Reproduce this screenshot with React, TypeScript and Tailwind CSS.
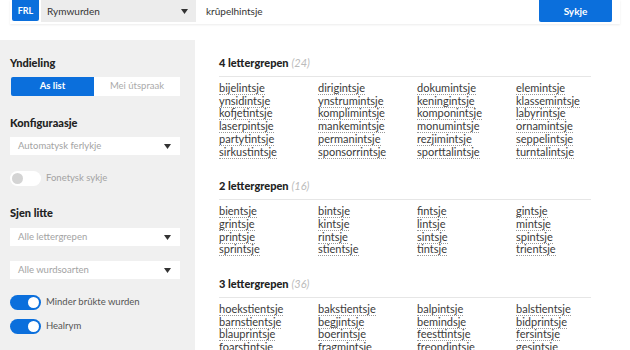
import React from "react";

const groups = [
  {
    title: "4 lettergrepen",
    count: 24,
    words: [
      "bijelintsje", "dirigintsje", "dokumintsje", "elemintsje",
      "ynsidintsje", "ynstrumintsje", "keningintsje", "klassemintsje",
      "kofjetintsje", "komplimintsje", "komponintsje", "labyrintsje",
      "laserpintsje", "mankemintsje", "monumintsje", "ornamintsje",
      "partytintsje", "permanintsje", "rezjimintsje", "seppelintsje",
      "sirkustintsje", "sponsorrintsje", "sporttalintsje", "turntalintsje",
    ],
  },
  {
    title: "2 lettergrepen",
    count: 16,
    words: [
      "bientsje", "bintsje", "fintsje", "gintsje",
      "grintsje", "kintsje", "lintsje", "mintsje",
      "printsje", "rintsje", "sintsje", "spintsje",
      "sprintsje", "stientsje", "tintsje", "trientsje",
    ],
  },
  {
    title: "3 lettergrepen",
    count: 36,
    words: [
      "hoekstientsje", "bakstientsje", "balpintsje", "balstientsje",
      "barnstientsje", "begjintsje", "bemindsje", "bidprintsje",
      "blauprintsje", "boerintsje", "feesttintsje", "fersintsje",
      "foarstintsje", "fragmintsje", "freondintsje", "gesintsje",
    ],
  },
];

function Caret() {
  return (
    <svg width="7" height="5" viewBox="0 0 7 5" className="shrink-0">
      <path d="M0 0 L7 0 L3.5 5 Z" fill="#333" />
    </svg>
  );
}

function Select({ label }: { label: string }) {
  return (
    <div className="flex h-[18px] items-center justify-between bg-white pl-[8px] pr-[9px] text-[9.5px] text-[#a3a3a3]">
      <span>{label}</span>
      <Caret />
    </div>
  );
}

function Toggle({ on, label }: { on: boolean; label: string }) {
  return (
    <div className="flex items-center gap-[5px]">
      <div
        className={
          on
            ? "flex h-[15px] w-[31px] items-center justify-end rounded-full bg-[#0b6fdc] pr-[2px]"
            : "flex h-[15px] w-[31px] items-center justify-start rounded-full bg-white pl-[2px]"
        }
      >
        <div
          className={
            on
              ? "h-[11px] w-[11px] rounded-full bg-white"
              : "h-[11px] w-[11px] rounded-full bg-[#d4d4d4]"
          }
        />
      </div>
      <span className={on ? "text-[9.5px] text-[#555]" : "text-[9.5px] text-[#a3a3a3]"}>
        {label}
      </span>
    </div>
  );
}

export default function App() {
  return (
    <div
      className="h-[350px] w-[630px] overflow-hidden bg-white"
      style={{ fontFamily: "Lato, 'Open Sans', sans-serif" }}
    >
      <div className="px-[10px]">
        <div className="flex h-[24px] items-start bg-white pl-[2px] pr-[8px] shadow-[0_1px_2px_rgba(0,0,0,0.08)]">
          <div className="flex h-[21px] w-[27px] items-center justify-center rounded-b-[2px] bg-[#0b6fdc] text-[9px] font-bold text-white">
            FRL
          </div>
          <div className="ml-[2px] flex h-[22px] w-[155px] items-center justify-between bg-[#ececec] pl-[6px] pr-[8px] text-[10px] text-[#333]">
            <span>Rymwurden</span>
            <Caret />
          </div>
          <div className="flex h-[22px] flex-1 items-center pl-[10px] text-[10px] text-[#333]">
            krûpelhintsje
          </div>
          <div className="flex h-[22px] w-[73px] items-center justify-center rounded-b-[2px] bg-[#0b6fdc] text-[10px] font-bold text-white">
            Sykje
          </div>
        </div>
      </div>

      <div className="mt-[16px] flex">
        <div className="h-[310px] w-[195px] shrink-0 bg-[#f0f0f0] pl-[10px] pr-[15px] pt-[16px]">
          <div className="text-[11px] font-black leading-[14px] text-[#222]">Yndieling</div>
          <div className="mt-[7px] flex h-[19px] pl-[1px] text-[9.5px]">
            <div className="flex w-[83px] items-center justify-center rounded-l-[2px] bg-[#0b6fdc] font-bold text-white">
              As list
            </div>
            <div className="flex flex-1 items-center justify-center bg-white text-[#aaa]">
              Mei útspraak
            </div>
          </div>

          <div className="mt-[20px] text-[11px] font-black leading-[14px] text-[#222]">Konfiguraasje</div>
          <div className="mt-[7px]">
            <Select label="Automatysk ferlykje" />
          </div>
          <div className="mt-[16px]">
            <Toggle on={false} label="Fonetysk sykje" />
          </div>

          <div className="mt-[20px] text-[11px] font-black leading-[14px] text-[#222]">Sjen litte</div>
          <div className="mt-[8px]">
            <Select label="Alle lettergrepen" />
          </div>
          <div className="mt-[15px]">
            <Select label="Alle wurdsoarten" />
          </div>
          <div className="mt-[16px] flex flex-col gap-[9px]">
            <Toggle on={true} label="Minder brûkte wurden" />
            <Toggle on={true} label="Healrym" />
          </div>
        </div>

        <div className="w-[396px] pl-[24px] pt-[16px]">
          {groups.map((g, i) => (
            <div key={g.title} className={i === 0 ? "" : "mt-[21px]"}>
              <div className="border-b border-[#e6e6e6] pb-[6px] text-[11px] leading-[14px]">
                <span className="font-black text-[#222]">{g.title}</span>{" "}
                <span className="italic text-[#bbb]">({g.count})</span>
              </div>
              <div className="grid grid-cols-[99px_99px_99px_99px] pt-[5px]">
                {g.words.map((w) => (
                  <div key={w} className="text-[11px] leading-[12.7px] text-[#3a3a3a]">
                    <span className="border-b border-dotted border-[#999]">{w}</span>
                  </div>
                ))}
              </div>
            </div>
          ))}
        </div>
      </div>
    </div>
  );
}
